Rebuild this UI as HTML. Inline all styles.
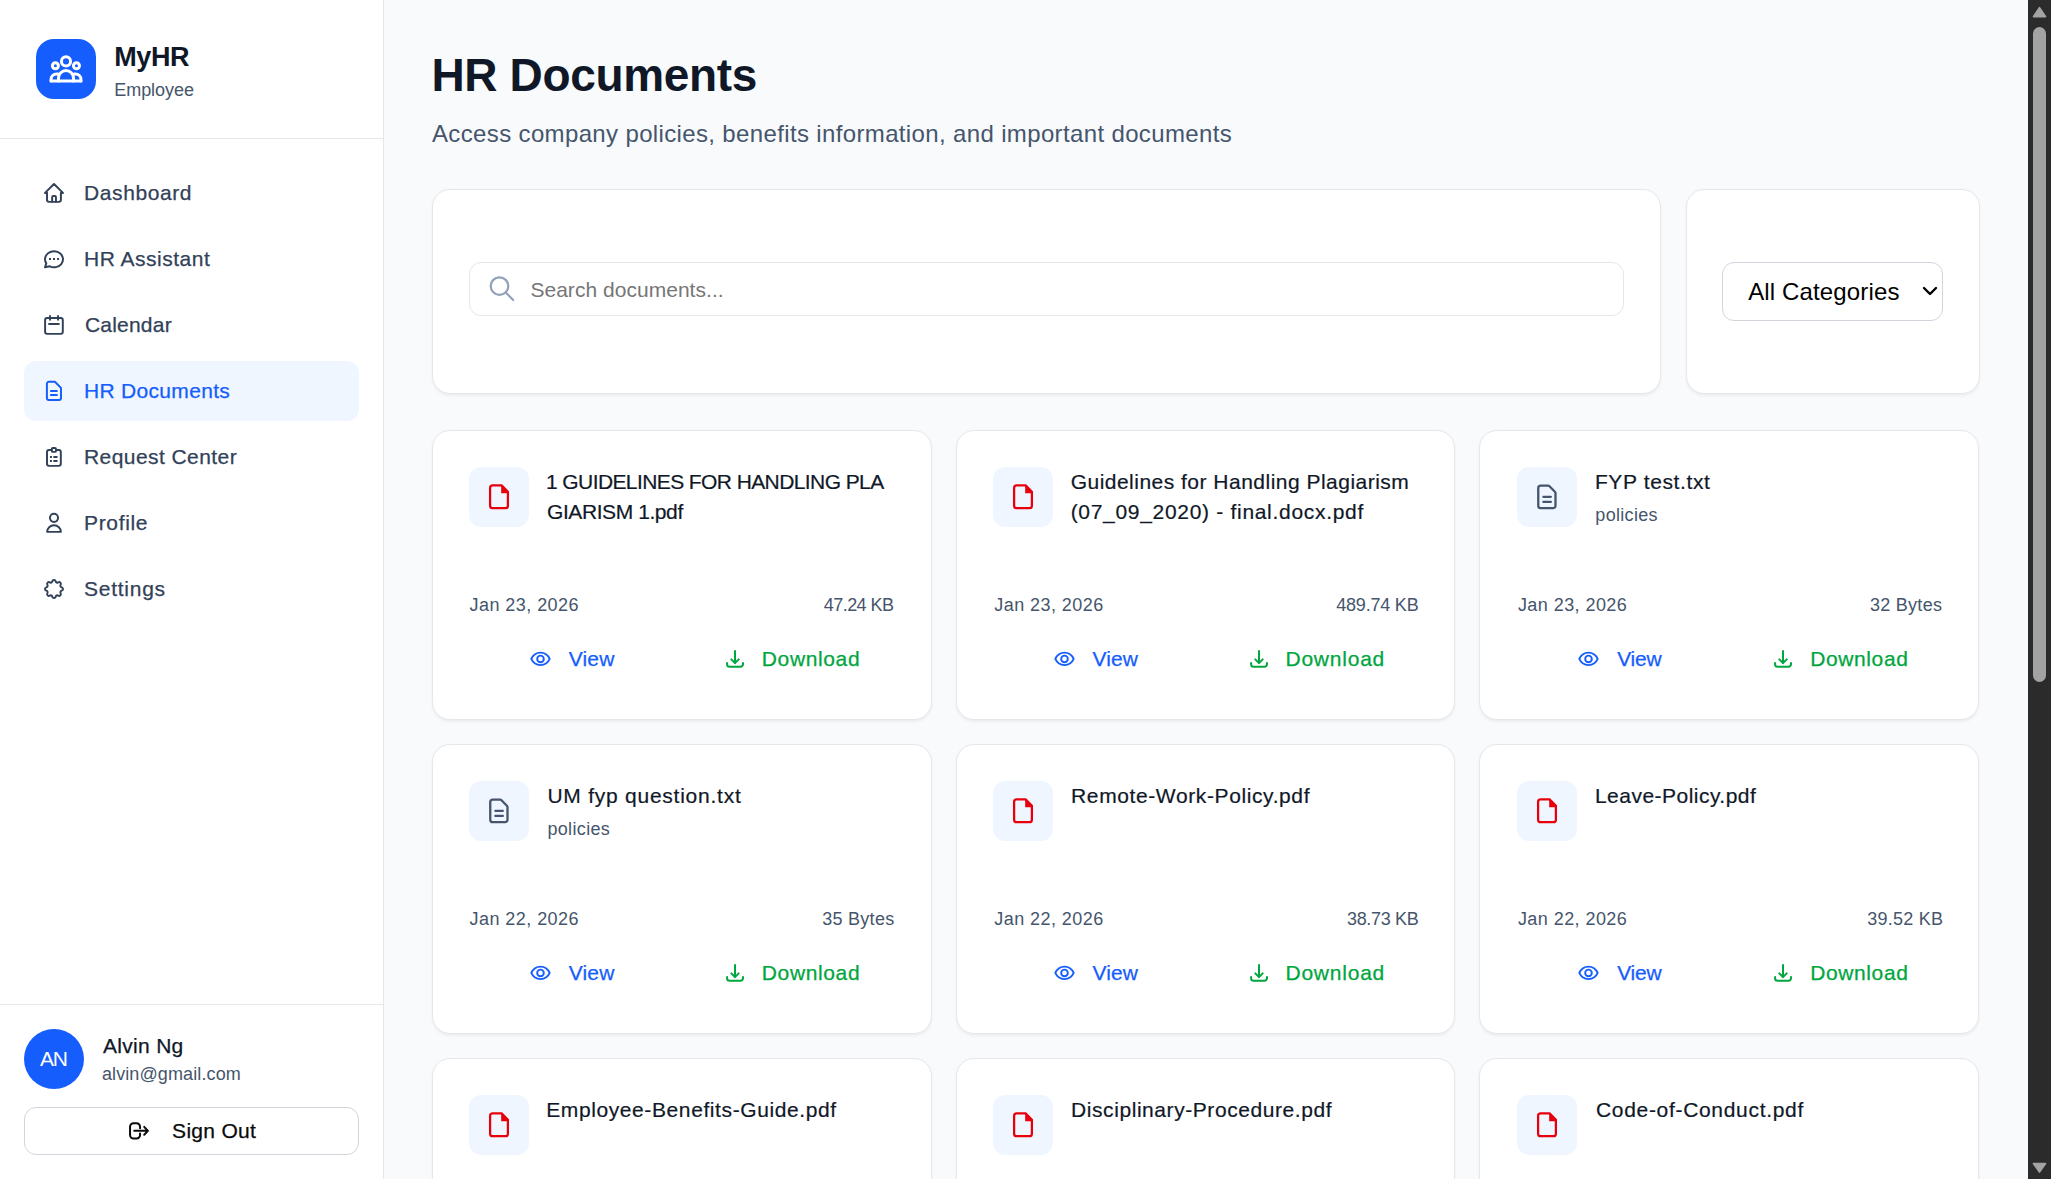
<!DOCTYPE html>
<html><head><meta charset="utf-8"><title>HR Documents</title>
<style>
html,body{margin:0;padding:0;}
body{width:2051px;height:1179px;overflow:hidden;position:relative;background:#f8fafc;font-family:"Liberation Sans", sans-serif;}
#sb{position:absolute;left:0;top:0;width:383px;height:1179px;background:#fff;}
.t{position:absolute;white-space:pre;}
svg{display:block;}
</style></head><body>
<div id="sb"></div><div style="position:absolute;left:383px;top:0;width:1px;height:1179px;background:#e5e7eb"></div>
<div style="position:absolute;left:0;top:138px;width:383px;height:1px;background:#e5e7eb"></div>
<div style="position:absolute;left:0;top:1004px;width:383px;height:1px;background:#e5e7eb"></div>
<div style="position:absolute;left:36px;top:39px;width:60px;height:60px;border-radius:18px;background:#155dfc">
<svg width="60" height="60" viewBox="0 0 60 60" fill="none" stroke="#fff" stroke-width="3" stroke-linecap="round" stroke-linejoin="round">
<circle cx="30" cy="22.4" r="4.55"/><circle cx="19.4" cy="26.8" r="3"/><circle cx="40.45" cy="26.8" r="3"/>
<path d="M15.06 42.05H44.95"/><path d="M22.5 42V39A7.5 7.5 0 0 1 37.5 39V42"/>
<path d="M15.06 42V40.5A5.5 5.5 0 0 1 20.56 35H22"/><path d="M44.95 42V40.5A5.5 5.5 0 0 0 39.45 35H38"/>
</svg></div>
<div class="t" style="left:114.20px;top:44.04px;font-size:27px;line-height:27px;color:#101828;font-weight:700;letter-spacing:-0.400px;">MyHR</div>
<div class="t" style="left:114.20px;top:80.96px;font-size:18px;line-height:18px;color:#45556c;letter-spacing:-0.029px;">Employee</div>
<svg style="position:absolute;left:42px;top:181px" width="24" height="24" viewBox="0 0 24 24" fill="none" stroke="#314158" stroke-width="1.95" stroke-linecap="round" stroke-linejoin="round"><path d="M5 11.9H3L12 3.05L21 11.9H19"/><path d="M5 11.9V18.85A2 2 0 0 0 7 20.85H16.9A2 2 0 0 0 18.9 18.85V11.9"/><path d="M10.15 20.85V16.2A1.15 1.15 0 0 1 11.3 15.05H12.8A1.15 1.15 0 0 1 13.95 16.2V20.85"/></svg>
<div class="t" style="left:84.00px;top:181.52px;font-size:21px;line-height:21px;color:#314158;-webkit-text-stroke:0.25px #314158;letter-spacing:0.600px;">Dashboard</div>
<svg style="position:absolute;left:42px;top:247px" width="24" height="24" viewBox="0 0 24 24" fill="none" stroke="#314158" stroke-width="1.95" stroke-linecap="round" stroke-linejoin="round"><path d="M3 20.3L4.3 16.4C1.976 12.963 2.874 8.528 6.4 6.026C9.926 3.525 14.99 3.73 18.245 6.506C21.5 9.283 21.94 13.772 19.274 17.007C16.608 20.242 11.659 21.222 7.7 19.3L3 20.3"/><path d="M8 11.96V11.97M12 11.96V11.97M16.05 11.96V11.97" stroke-linecap="square"/></svg>
<div class="t" style="left:84.00px;top:247.52px;font-size:21px;line-height:21px;color:#314158;-webkit-text-stroke:0.25px #314158;letter-spacing:0.509px;">HR Assistant</div>
<svg style="position:absolute;left:42px;top:313px" width="24" height="24" viewBox="0 0 24 24" fill="none" stroke="#314158" stroke-width="1.95" stroke-linecap="round" stroke-linejoin="round"><rect x="3.1" y="5.05" width="17.7" height="15.8" rx="2"/><path d="M8 3.05V6.85M16.05 3.05V6.85"/><path d="M7.05 10.9H16.85"/></svg>
<div class="t" style="left:85.00px;top:313.52px;font-size:21px;line-height:21px;color:#314158;-webkit-text-stroke:0.25px #314158;letter-spacing:0.200px;">Calendar</div>
<div style="position:absolute;left:24px;top:361px;width:335px;height:60px;border-radius:12px;background:#eff6ff"></div>
<svg style="position:absolute;left:42px;top:379px" width="24" height="24" viewBox="0 0 24 24" fill="none" stroke="#155dfc" stroke-width="1.95" stroke-linecap="round" stroke-linejoin="round"><path d="M4.9 4.8A2 2 0 0 1 6.9 2.8H12.9L19 8.9V18.9A2 2 0 0 1 17 20.9H6.9A2 2 0 0 1 4.9 18.9Z"/><path d="M8.9 11.96H14.9M8.9 16H14.9"/></svg>
<div class="t" style="left:84.00px;top:379.52px;font-size:21px;line-height:21px;color:#155dfc;-webkit-text-stroke:0.25px #155dfc;letter-spacing:0.309px;">HR Documents</div>
<svg style="position:absolute;left:42px;top:445px" width="24" height="24" viewBox="0 0 24 24" fill="none" stroke="#314158" stroke-width="1.95" stroke-linecap="round" stroke-linejoin="round"><path d="M9.75 5.05H7A2 2 0 0 0 5 7.05V18.85A2 2 0 0 0 7 20.85H16.8A2 2 0 0 0 18.8 18.85V7.05A2 2 0 0 0 16.8 5.05H14.05"/><rect x="9.75" y="3.05" width="4.3" height="3.8" rx="1.2"/><path d="M8.95 11.96V11.97M8.95 16V16.01" stroke-linecap="square"/><path d="M12.1 11.96H14.8M12.1 16H14.8"/></svg>
<div class="t" style="left:84.00px;top:445.52px;font-size:21px;line-height:21px;color:#314158;-webkit-text-stroke:0.25px #314158;letter-spacing:0.431px;">Request Center</div>
<svg style="position:absolute;left:42px;top:511px" width="24" height="24" viewBox="0 0 24 24" fill="none" stroke="#314158" stroke-width="1.95" stroke-linecap="round" stroke-linejoin="round"><circle cx="12" cy="6.85" r="4.05"/><path d="M5.15 20.85A6.875 6.6 0 0 1 18.9 20.85Z"/></svg>
<div class="t" style="left:84.00px;top:511.52px;font-size:21px;line-height:21px;color:#314158;-webkit-text-stroke:0.25px #314158;letter-spacing:0.667px;">Profile</div>
<svg style="position:absolute;left:42px;top:577px" width="24" height="24" viewBox="0 0 24 24" fill="none" stroke="#314158" stroke-width="1.95" stroke-linecap="round" stroke-linejoin="round"><path d="M10.325 4.317c.426 -1.756 2.924 -1.756 3.35 0a1.724 1.724 0 0 0 2.573 1.066c1.543 -.94 3.31 .826 2.37 2.37a1.724 1.724 0 0 0 1.065 2.572c1.756 .426 1.756 2.924 0 3.35a1.724 1.724 0 0 0 -1.066 2.573c.94 1.543 -.826 3.31 -2.37 2.37a1.724 1.724 0 0 0 -2.572 1.065c-.426 1.756 -2.924 1.756 -3.35 0a1.724 1.724 0 0 0 -2.573 -1.066c-1.543 .94 -3.31 -.826 -2.37 -2.37a1.724 1.724 0 0 0 -1.065 -2.572c-1.756 -.426 -1.756 -2.924 0 -3.35a1.724 1.724 0 0 0 1.066 -2.573c-.94 -1.543 .826 -3.31 2.37 -2.37c1 .608 2.296 .07 2.572 -1.065z"/></svg>
<div class="t" style="left:84.00px;top:577.52px;font-size:21px;line-height:21px;color:#314158;-webkit-text-stroke:0.25px #314158;letter-spacing:0.743px;">Settings</div>
<div style="position:absolute;left:24px;top:1029px;width:60px;height:60px;border-radius:50%;background:#155dfc"></div>
<div class="t" style="left:40.00px;top:1048.02px;font-size:21px;line-height:21px;color:#ffffff;letter-spacing:-1.200px;">AN</div>
<div class="t" style="left:102.90px;top:1035.22px;font-size:21px;line-height:21px;color:#101828;-webkit-text-stroke:0.25px #101828;letter-spacing:0.314px;">Alvin Ng</div>
<div class="t" style="left:101.90px;top:1064.56px;font-size:18px;line-height:18px;color:#45556c;letter-spacing:0.114px;">alvin@gmail.com</div>
<div style="position:absolute;left:24px;top:1107px;width:335px;height:48px;box-sizing:border-box;border:1.5px solid #d1d5dc;border-radius:12px;background:#fff"></div>
<svg style="position:absolute;left:127px;top:1119px" width="24" height="24" viewBox="0 0 24 24" fill="none" stroke="#0a0a0a" stroke-width="2" stroke-linecap="round" stroke-linejoin="round"><path d="M13.05 9.2V7.75A3.5 3.5 0 0 0 9.55 4.25H6.55A3.5 3.5 0 0 0 3.05 7.75V16.05A3.5 3.5 0 0 0 6.55 19.55H9.55A3.5 3.5 0 0 0 13.05 16.05V14.6"/><path d="M7.2 11.85H20.9M17.2 7.9L20.9 11.85L17.2 15.8"/></svg>
<div class="t" style="left:172.10px;top:1119.62px;font-size:21px;line-height:21px;color:#0a0a0a;-webkit-text-stroke:0.25px #0a0a0a;letter-spacing:0.286px;">Sign Out</div>
<div class="t" style="left:431.40px;top:52.46px;font-size:46px;line-height:46px;color:#101828;font-weight:700;letter-spacing:-0.345px;">HR Documents</div>
<div class="t" style="left:432.00px;top:121.58px;font-size:24px;line-height:24px;color:#45556c;letter-spacing:0.357px;">Access company policies, benefits information, and important documents</div>
<div style="position:absolute;background:#fff;border:1.5px solid #e5e7eb;border-radius:18px;box-shadow:0 1.5px 3px rgba(0,0,0,0.05);box-sizing:border-box;left:432px;top:189px;width:1228.5px;height:204.5px"></div>
<div style="position:absolute;background:#fff;border:1.5px solid #e5e7eb;border-radius:18px;box-shadow:0 1.5px 3px rgba(0,0,0,0.05);box-sizing:border-box;left:1685.5px;top:189px;width:294px;height:204.5px"></div>
<div style="position:absolute;left:469px;top:262px;width:1155px;height:53.5px;box-sizing:border-box;border:1.5px solid #e5e7eb;border-radius:12px;background:#fff"></div>
<svg style="position:absolute;left:486px;top:273px" width="30" height="30" viewBox="0 0 30 30" fill="none" stroke="#90a1b9" stroke-width="2.2" stroke-linecap="round"><circle cx="13.5" cy="13.1" r="8.8"/><path d="M20 19.7L27.2 27"/></svg>
<div class="t" style="left:530.40px;top:279.32px;font-size:21px;line-height:21px;color:#767676;letter-spacing:0.033px;">Search documents...</div>
<div style="position:absolute;left:1722px;top:262px;width:221px;height:59px;box-sizing:border-box;border:1.5px solid #d1d5dc;border-radius:12px;background:#fff"></div>
<div class="t" style="left:1748.20px;top:279.88px;font-size:24px;line-height:24px;color:#000000;letter-spacing:0.138px;">All Categories</div>
<svg style="position:absolute;left:1920px;top:283px" width="20" height="16" viewBox="0 0 20 16" fill="none" stroke="#000" stroke-width="2.4" stroke-linecap="round" stroke-linejoin="round"><path d="M4 5L10 11L16 5"/></svg>
<div style="position:absolute;background:#fff;border:1.5px solid #e5e7eb;border-radius:18px;box-shadow:0 1.5px 3px rgba(0,0,0,0.05);box-sizing:border-box;left:432.0px;top:430px;width:499.67px;height:290px"></div>
<div style="position:absolute;left:469px;top:467px;width:60px;height:60px;border-radius:12px;background:#eff6ff"></div>
<svg style="position:absolute;left:485px;top:481.6px" width="30" height="30" viewBox="0 0 30 30" fill="none" stroke="#e7000b" stroke-width="2.25" stroke-linejoin="round"><path d="M5.1 5.9A2.5 2.5 0 0 1 7.6 3.4H16.6L22.9 9.7V23.7A2.5 2.5 0 0 1 20.4 26.2H7.6A2.5 2.5 0 0 1 5.1 23.7Z"/><path d="M16.2 3.4V11.2H23.9Z" fill="#e7000b" stroke="none"/></svg><div class="t" style="left:546.00px;top:470.92px;font-size:21px;line-height:21px;color:#101828;-webkit-text-stroke:0.2px #101828;letter-spacing:-0.593px;">1 GUIDELINES FOR HANDLING PLA</div>
<div class="t" style="left:547.00px;top:500.72px;font-size:21px;line-height:21px;color:#101828;-webkit-text-stroke:0.2px #101828;letter-spacing:-0.417px;">GIARISM 1.pdf</div>
<div class="t" style="left:469.60px;top:596.26px;font-size:18px;line-height:18px;color:#45556c;letter-spacing:0.436px;">Jan 23, 2026</div>
<div class="t" style="right:1157.00px;top:596.26px;font-size:18px;line-height:18px;color:#45556c;text-align:right;letter-spacing:-0.543px;margin-right:0.543px;">47.24 KB</div>
<svg style="position:absolute;left:529px;top:647px" width="24" height="24" viewBox="0 0 24 24" fill="none" stroke="#155dfc" stroke-width="1.9" stroke-linecap="round" stroke-linejoin="round"><path d="M2.3 11.9C4.3 7.5 7.8 5.6 11.5 5.6S18.7 7.5 20.7 11.9C18.7 16.3 15.2 18.1 11.5 18.1S4.3 16.3 2.3 11.9Z"/><circle cx="11.5" cy="11.9" r="3.3"/></svg><div class="t" style="left:568.80px;top:647.62px;font-size:21px;line-height:21px;color:#155dfc;-webkit-text-stroke:0.25px #155dfc;letter-spacing:0.133px;">View</div>
<svg style="position:absolute;left:722px;top:648px" width="24" height="24" viewBox="0 0 24 24" fill="none" stroke="#00a63e" stroke-width="2" stroke-linecap="round" stroke-linejoin="round"><path d="M13 3V15.2M9.3 11.4L13 15.1L16.7 11.4"/><path d="M5.1 14.9V16.3A2.5 2.5 0 0 0 7.6 18.8H18.5A2.5 2.5 0 0 0 21 16.3V14.9"/></svg><div class="t" style="left:761.80px;top:647.62px;font-size:21px;line-height:21px;color:#00a63e;-webkit-text-stroke:0.25px #00a63e;letter-spacing:0.629px;">Download</div>
<div style="position:absolute;background:#fff;border:1.5px solid #e5e7eb;border-radius:18px;box-shadow:0 1.5px 3px rgba(0,0,0,0.05);box-sizing:border-box;left:955.67px;top:430px;width:499.67px;height:290px"></div>
<div style="position:absolute;left:993px;top:467px;width:60px;height:60px;border-radius:12px;background:#eff6ff"></div>
<svg style="position:absolute;left:1009px;top:481.6px" width="30" height="30" viewBox="0 0 30 30" fill="none" stroke="#e7000b" stroke-width="2.25" stroke-linejoin="round"><path d="M5.1 5.9A2.5 2.5 0 0 1 7.6 3.4H16.6L22.9 9.7V23.7A2.5 2.5 0 0 1 20.4 26.2H7.6A2.5 2.5 0 0 1 5.1 23.7Z"/><path d="M16.2 3.4V11.2H23.9Z" fill="#e7000b" stroke="none"/></svg><div class="t" style="left:1070.67px;top:470.92px;font-size:21px;line-height:21px;color:#101828;-webkit-text-stroke:0.2px #101828;letter-spacing:0.485px;">Guidelines for Handling Plagiarism</div>
<div class="t" style="left:1070.67px;top:500.72px;font-size:21px;line-height:21px;color:#101828;-webkit-text-stroke:0.2px #101828;letter-spacing:0.693px;">(07_09_2020) - final.docx.pdf</div>
<div class="t" style="left:994.27px;top:596.26px;font-size:18px;line-height:18px;color:#45556c;letter-spacing:0.436px;">Jan 23, 2026</div>
<div class="t" style="right:632.33px;top:596.26px;font-size:18px;line-height:18px;color:#45556c;text-align:right;letter-spacing:-0.200px;margin-right:0.200px;">489.74 KB</div>
<svg style="position:absolute;left:1053px;top:647px" width="24" height="24" viewBox="0 0 24 24" fill="none" stroke="#155dfc" stroke-width="1.9" stroke-linecap="round" stroke-linejoin="round"><path d="M2.3 11.9C4.3 7.5 7.8 5.6 11.5 5.6S18.7 7.5 20.7 11.9C18.7 16.3 15.2 18.1 11.5 18.1S4.3 16.3 2.3 11.9Z"/><circle cx="11.5" cy="11.9" r="3.3"/></svg><div class="t" style="left:1092.47px;top:647.62px;font-size:21px;line-height:21px;color:#155dfc;-webkit-text-stroke:0.25px #155dfc;letter-spacing:0.133px;">View</div>
<svg style="position:absolute;left:1246px;top:648px" width="24" height="24" viewBox="0 0 24 24" fill="none" stroke="#00a63e" stroke-width="2" stroke-linecap="round" stroke-linejoin="round"><path d="M13 3V15.2M9.3 11.4L13 15.1L16.7 11.4"/><path d="M5.1 14.9V16.3A2.5 2.5 0 0 0 7.6 18.8H18.5A2.5 2.5 0 0 0 21 16.3V14.9"/></svg><div class="t" style="left:1285.47px;top:647.62px;font-size:21px;line-height:21px;color:#00a63e;-webkit-text-stroke:0.25px #00a63e;letter-spacing:0.771px;">Download</div>
<div style="position:absolute;background:#fff;border:1.5px solid #e5e7eb;border-radius:18px;box-shadow:0 1.5px 3px rgba(0,0,0,0.05);box-sizing:border-box;left:1479.33px;top:430px;width:499.67px;height:290px"></div>
<div style="position:absolute;left:1517px;top:467px;width:60px;height:60px;border-radius:12px;background:#eff6ff"></div>
<svg style="position:absolute;left:1532px;top:481px" width="30" height="30" viewBox="0 0 30 30" fill="none" stroke="#45556c" stroke-width="2.3" stroke-linecap="round" stroke-linejoin="round"><path d="M6.25 7.2A2.5 2.5 0 0 1 8.75 4.7H16.1A2 2 0 0 1 17.5 5.3L22.9 10.7A2 2 0 0 1 23.5 12.1V24.7A2.5 2.5 0 0 1 21 27.2H8.75A2.5 2.5 0 0 1 6.25 24.7Z"/><path d="M11.35 15.8H18.85M11.35 20.9H18.85"/></svg><div class="t" style="left:1594.93px;top:470.92px;font-size:21px;line-height:21px;color:#101828;-webkit-text-stroke:0.2px #101828;letter-spacing:0.618px;">FYP test.txt</div>
<div class="t" style="left:1595.33px;top:506.26px;font-size:18px;line-height:18px;color:#45556c;letter-spacing:0.314px;">policies</div>
<div class="t" style="left:1517.93px;top:596.26px;font-size:18px;line-height:18px;color:#45556c;letter-spacing:0.436px;">Jan 23, 2026</div>
<div class="t" style="right:109.07px;top:596.26px;font-size:18px;line-height:18px;color:#45556c;text-align:right;letter-spacing:0.286px;margin-right:-0.286px;">32 Bytes</div>
<svg style="position:absolute;left:1577px;top:647px" width="24" height="24" viewBox="0 0 24 24" fill="none" stroke="#155dfc" stroke-width="1.9" stroke-linecap="round" stroke-linejoin="round"><path d="M2.3 11.9C4.3 7.5 7.8 5.6 11.5 5.6S18.7 7.5 20.7 11.9C18.7 16.3 15.2 18.1 11.5 18.1S4.3 16.3 2.3 11.9Z"/><circle cx="11.5" cy="11.9" r="3.3"/></svg><div class="t" style="left:1617.13px;top:647.62px;font-size:21px;line-height:21px;color:#155dfc;-webkit-text-stroke:0.25px #155dfc;letter-spacing:-0.200px;">View</div>
<svg style="position:absolute;left:1770px;top:648px" width="24" height="24" viewBox="0 0 24 24" fill="none" stroke="#00a63e" stroke-width="2" stroke-linecap="round" stroke-linejoin="round"><path d="M13 3V15.2M9.3 11.4L13 15.1L16.7 11.4"/><path d="M5.1 14.9V16.3A2.5 2.5 0 0 0 7.6 18.8H18.5A2.5 2.5 0 0 0 21 16.3V14.9"/></svg><div class="t" style="left:1810.13px;top:647.62px;font-size:21px;line-height:21px;color:#00a63e;-webkit-text-stroke:0.25px #00a63e;letter-spacing:0.629px;">Download</div>
<div style="position:absolute;background:#fff;border:1.5px solid #e5e7eb;border-radius:18px;box-shadow:0 1.5px 3px rgba(0,0,0,0.05);box-sizing:border-box;left:432.0px;top:744px;width:499.67px;height:290px"></div>
<div style="position:absolute;left:469px;top:781px;width:60px;height:60px;border-radius:12px;background:#eff6ff"></div>
<svg style="position:absolute;left:484px;top:795px" width="30" height="30" viewBox="0 0 30 30" fill="none" stroke="#45556c" stroke-width="2.3" stroke-linecap="round" stroke-linejoin="round"><path d="M6.25 7.2A2.5 2.5 0 0 1 8.75 4.7H16.1A2 2 0 0 1 17.5 5.3L22.9 10.7A2 2 0 0 1 23.5 12.1V24.7A2.5 2.5 0 0 1 21 27.2H8.75A2.5 2.5 0 0 1 6.25 24.7Z"/><path d="M11.35 15.8H18.85M11.35 20.9H18.85"/></svg><div class="t" style="left:547.40px;top:784.92px;font-size:21px;line-height:21px;color:#101828;-webkit-text-stroke:0.2px #101828;letter-spacing:0.756px;">UM fyp question.txt</div>
<div class="t" style="left:547.40px;top:820.26px;font-size:18px;line-height:18px;color:#45556c;letter-spacing:0.343px;">policies</div>
<div class="t" style="left:469.60px;top:910.26px;font-size:18px;line-height:18px;color:#45556c;letter-spacing:0.436px;">Jan 22, 2026</div>
<div class="t" style="right:1156.80px;top:910.26px;font-size:18px;line-height:18px;color:#45556c;text-align:right;letter-spacing:0.286px;margin-right:-0.286px;">35 Bytes</div>
<svg style="position:absolute;left:529px;top:961px" width="24" height="24" viewBox="0 0 24 24" fill="none" stroke="#155dfc" stroke-width="1.9" stroke-linecap="round" stroke-linejoin="round"><path d="M2.3 11.9C4.3 7.5 7.8 5.6 11.5 5.6S18.7 7.5 20.7 11.9C18.7 16.3 15.2 18.1 11.5 18.1S4.3 16.3 2.3 11.9Z"/><circle cx="11.5" cy="11.9" r="3.3"/></svg><div class="t" style="left:568.80px;top:961.62px;font-size:21px;line-height:21px;color:#155dfc;-webkit-text-stroke:0.25px #155dfc;letter-spacing:0.133px;">View</div>
<svg style="position:absolute;left:722px;top:962px" width="24" height="24" viewBox="0 0 24 24" fill="none" stroke="#00a63e" stroke-width="2" stroke-linecap="round" stroke-linejoin="round"><path d="M13 3V15.2M9.3 11.4L13 15.1L16.7 11.4"/><path d="M5.1 14.9V16.3A2.5 2.5 0 0 0 7.6 18.8H18.5A2.5 2.5 0 0 0 21 16.3V14.9"/></svg><div class="t" style="left:761.80px;top:961.62px;font-size:21px;line-height:21px;color:#00a63e;-webkit-text-stroke:0.25px #00a63e;letter-spacing:0.629px;">Download</div>
<div style="position:absolute;background:#fff;border:1.5px solid #e5e7eb;border-radius:18px;box-shadow:0 1.5px 3px rgba(0,0,0,0.05);box-sizing:border-box;left:955.67px;top:744px;width:499.67px;height:290px"></div>
<div style="position:absolute;left:993px;top:781px;width:60px;height:60px;border-radius:12px;background:#eff6ff"></div>
<svg style="position:absolute;left:1009px;top:795.6px" width="30" height="30" viewBox="0 0 30 30" fill="none" stroke="#e7000b" stroke-width="2.25" stroke-linejoin="round"><path d="M5.1 5.9A2.5 2.5 0 0 1 7.6 3.4H16.6L22.9 9.7V23.7A2.5 2.5 0 0 1 20.4 26.2H7.6A2.5 2.5 0 0 1 5.1 23.7Z"/><path d="M16.2 3.4V11.2H23.9Z" fill="#e7000b" stroke="none"/></svg><div class="t" style="left:1071.07px;top:784.92px;font-size:21px;line-height:21px;color:#101828;-webkit-text-stroke:0.2px #101828;letter-spacing:0.610px;">Remote-Work-Policy.pdf</div>
<div class="t" style="left:994.27px;top:910.26px;font-size:18px;line-height:18px;color:#45556c;letter-spacing:0.436px;">Jan 22, 2026</div>
<div class="t" style="right:632.33px;top:910.26px;font-size:18px;line-height:18px;color:#45556c;text-align:right;letter-spacing:-0.343px;margin-right:0.343px;">38.73 KB</div>
<svg style="position:absolute;left:1053px;top:961px" width="24" height="24" viewBox="0 0 24 24" fill="none" stroke="#155dfc" stroke-width="1.9" stroke-linecap="round" stroke-linejoin="round"><path d="M2.3 11.9C4.3 7.5 7.8 5.6 11.5 5.6S18.7 7.5 20.7 11.9C18.7 16.3 15.2 18.1 11.5 18.1S4.3 16.3 2.3 11.9Z"/><circle cx="11.5" cy="11.9" r="3.3"/></svg><div class="t" style="left:1092.47px;top:961.62px;font-size:21px;line-height:21px;color:#155dfc;-webkit-text-stroke:0.25px #155dfc;letter-spacing:0.133px;">View</div>
<svg style="position:absolute;left:1246px;top:962px" width="24" height="24" viewBox="0 0 24 24" fill="none" stroke="#00a63e" stroke-width="2" stroke-linecap="round" stroke-linejoin="round"><path d="M13 3V15.2M9.3 11.4L13 15.1L16.7 11.4"/><path d="M5.1 14.9V16.3A2.5 2.5 0 0 0 7.6 18.8H18.5A2.5 2.5 0 0 0 21 16.3V14.9"/></svg><div class="t" style="left:1285.47px;top:961.62px;font-size:21px;line-height:21px;color:#00a63e;-webkit-text-stroke:0.25px #00a63e;letter-spacing:0.771px;">Download</div>
<div style="position:absolute;background:#fff;border:1.5px solid #e5e7eb;border-radius:18px;box-shadow:0 1.5px 3px rgba(0,0,0,0.05);box-sizing:border-box;left:1479.33px;top:744px;width:499.67px;height:290px"></div>
<div style="position:absolute;left:1517px;top:781px;width:60px;height:60px;border-radius:12px;background:#eff6ff"></div>
<svg style="position:absolute;left:1533px;top:795.6px" width="30" height="30" viewBox="0 0 30 30" fill="none" stroke="#e7000b" stroke-width="2.25" stroke-linejoin="round"><path d="M5.1 5.9A2.5 2.5 0 0 1 7.6 3.4H16.6L22.9 9.7V23.7A2.5 2.5 0 0 1 20.4 26.2H7.6A2.5 2.5 0 0 1 5.1 23.7Z"/><path d="M16.2 3.4V11.2H23.9Z" fill="#e7000b" stroke="none"/></svg><div class="t" style="left:1594.93px;top:784.92px;font-size:21px;line-height:21px;color:#101828;-webkit-text-stroke:0.2px #101828;letter-spacing:0.480px;">Leave-Policy.pdf</div>
<div class="t" style="left:1517.93px;top:910.26px;font-size:18px;line-height:18px;color:#45556c;letter-spacing:0.436px;">Jan 22, 2026</div>
<div class="t" style="right:108.07px;top:910.26px;font-size:18px;line-height:18px;color:#45556c;text-align:right;letter-spacing:0.229px;margin-right:-0.229px;">39.52 KB</div>
<svg style="position:absolute;left:1577px;top:961px" width="24" height="24" viewBox="0 0 24 24" fill="none" stroke="#155dfc" stroke-width="1.9" stroke-linecap="round" stroke-linejoin="round"><path d="M2.3 11.9C4.3 7.5 7.8 5.6 11.5 5.6S18.7 7.5 20.7 11.9C18.7 16.3 15.2 18.1 11.5 18.1S4.3 16.3 2.3 11.9Z"/><circle cx="11.5" cy="11.9" r="3.3"/></svg><div class="t" style="left:1617.13px;top:961.62px;font-size:21px;line-height:21px;color:#155dfc;-webkit-text-stroke:0.25px #155dfc;letter-spacing:-0.200px;">View</div>
<svg style="position:absolute;left:1770px;top:962px" width="24" height="24" viewBox="0 0 24 24" fill="none" stroke="#00a63e" stroke-width="2" stroke-linecap="round" stroke-linejoin="round"><path d="M13 3V15.2M9.3 11.4L13 15.1L16.7 11.4"/><path d="M5.1 14.9V16.3A2.5 2.5 0 0 0 7.6 18.8H18.5A2.5 2.5 0 0 0 21 16.3V14.9"/></svg><div class="t" style="left:1810.13px;top:961.62px;font-size:21px;line-height:21px;color:#00a63e;-webkit-text-stroke:0.25px #00a63e;letter-spacing:0.629px;">Download</div>
<div style="position:absolute;background:#fff;border:1.5px solid #e5e7eb;border-radius:18px;box-shadow:0 1.5px 3px rgba(0,0,0,0.05);box-sizing:border-box;left:432.0px;top:1058px;width:499.67px;height:290px"></div>
<div style="position:absolute;left:469px;top:1095px;width:60px;height:60px;border-radius:12px;background:#eff6ff"></div>
<svg style="position:absolute;left:485px;top:1109.6px" width="30" height="30" viewBox="0 0 30 30" fill="none" stroke="#e7000b" stroke-width="2.25" stroke-linejoin="round"><path d="M5.1 5.9A2.5 2.5 0 0 1 7.6 3.4H16.6L22.9 9.7V23.7A2.5 2.5 0 0 1 20.4 26.2H7.6A2.5 2.5 0 0 1 5.1 23.7Z"/><path d="M16.2 3.4V11.2H23.9Z" fill="#e7000b" stroke="none"/></svg><div class="t" style="left:546.20px;top:1098.92px;font-size:21px;line-height:21px;color:#101828;-webkit-text-stroke:0.2px #101828;letter-spacing:0.600px;">Employee-Benefits-Guide.pdf</div>
<div style="position:absolute;background:#fff;border:1.5px solid #e5e7eb;border-radius:18px;box-shadow:0 1.5px 3px rgba(0,0,0,0.05);box-sizing:border-box;left:955.67px;top:1058px;width:499.67px;height:290px"></div>
<div style="position:absolute;left:993px;top:1095px;width:60px;height:60px;border-radius:12px;background:#eff6ff"></div>
<svg style="position:absolute;left:1009px;top:1109.6px" width="30" height="30" viewBox="0 0 30 30" fill="none" stroke="#e7000b" stroke-width="2.25" stroke-linejoin="round"><path d="M5.1 5.9A2.5 2.5 0 0 1 7.6 3.4H16.6L22.9 9.7V23.7A2.5 2.5 0 0 1 20.4 26.2H7.6A2.5 2.5 0 0 1 5.1 23.7Z"/><path d="M16.2 3.4V11.2H23.9Z" fill="#e7000b" stroke="none"/></svg><div class="t" style="left:1071.07px;top:1098.92px;font-size:21px;line-height:21px;color:#101828;-webkit-text-stroke:0.2px #101828;letter-spacing:0.568px;">Disciplinary-Procedure.pdf</div>
<div style="position:absolute;background:#fff;border:1.5px solid #e5e7eb;border-radius:18px;box-shadow:0 1.5px 3px rgba(0,0,0,0.05);box-sizing:border-box;left:1479.33px;top:1058px;width:499.67px;height:290px"></div>
<div style="position:absolute;left:1517px;top:1095px;width:60px;height:60px;border-radius:12px;background:#eff6ff"></div>
<svg style="position:absolute;left:1533px;top:1109.6px" width="30" height="30" viewBox="0 0 30 30" fill="none" stroke="#e7000b" stroke-width="2.25" stroke-linejoin="round"><path d="M5.1 5.9A2.5 2.5 0 0 1 7.6 3.4H16.6L22.9 9.7V23.7A2.5 2.5 0 0 1 20.4 26.2H7.6A2.5 2.5 0 0 1 5.1 23.7Z"/><path d="M16.2 3.4V11.2H23.9Z" fill="#e7000b" stroke="none"/></svg><div class="t" style="left:1595.93px;top:1098.92px;font-size:21px;line-height:21px;color:#101828;-webkit-text-stroke:0.2px #101828;letter-spacing:0.689px;">Code-of-Conduct.pdf</div>
<div style="position:absolute;left:2028px;top:0;width:23px;height:1179px;background:#2b2b2b"></div>
<div style="position:absolute;left:2033px;top:27px;width:13px;height:655px;border-radius:7px;background:#a3a3a3"></div>
<svg style="position:absolute;left:2028px;top:0" width="23" height="24" viewBox="0 0 23 24"><path d="M11.5 7.6L17.6 16.6H5.4Z" fill="#a3a3a3" stroke="#a3a3a3" stroke-width="1.6" stroke-linejoin="round"/></svg>
<svg style="position:absolute;left:2028px;top:1155px" width="23" height="24" viewBox="0 0 23 24"><path d="M11.5 17.1L17.6 8.6H5.4Z" fill="#a3a3a3" stroke="#a3a3a3" stroke-width="1.6" stroke-linejoin="round"/></svg>

</body></html>
